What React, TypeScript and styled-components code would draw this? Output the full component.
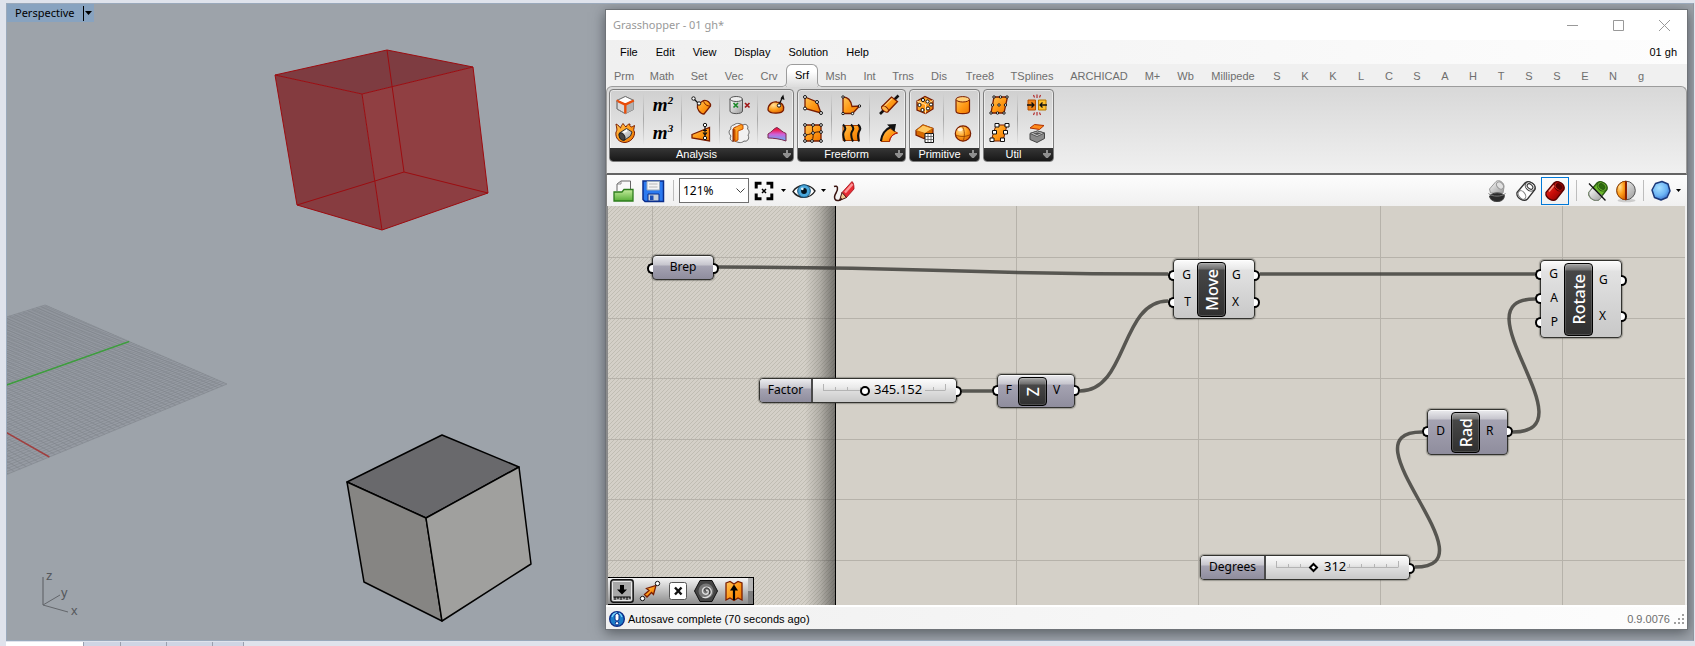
import React, { useState } from "react";
import styled, { createGlobalStyle, css } from "styled-components";

const UI = `"Liberation Sans", Arial, sans-serif`;
const HUMAN = `"Noto Sans", "Open Sans", sans-serif`;

const GlobalStyle = createGlobalStyle`
  *, *::before, *::after { box-sizing: border-box; }
  html, body { margin: 0; padding: 0; }
  body { background: #dfe3ec; font: 11px/16px ${UI}; color: #000; }
  button, input, select { font: inherit; color: inherit; margin: 0; padding: 0; }
  button { background: none; border: 0; cursor: default; }
  svg { display: block; }
`;

/* ---------- shell ---------- */

const Desktop = styled.div`
  min-height: 100vh;
  display: flex;
  flex-direction: column;
  padding: 3px 1px 0 6px;
  background: #dfe3ec;
`;

const Viewport = styled.main`
  position: relative;
  flex: 1;
  min-height: 600px;
  overflow: hidden;
  background: #9da3aa;
  border: 1px solid #9aa9bb;
  border-right-color: #8f959d;
`;

const ViewportTitle = styled.div`
  position: absolute;
  top: 0;
  left: 0;
  display: flex;
  align-items: center;
  height: 18px;
  padding: 0 2px 0 8px;
  gap: 8px;
  background: #88a3c0;
  font: 11px/18px ${HUMAN};
`;

const TitleMenu = styled.button`
  display: flex;
  align-items: center;
  height: 15px;
  width: 9px;
  border-left: 1px solid #000;
  padding-left: 1px;
`;

const Scene = styled.svg`
  position: absolute;
  inset: 0;
  width: 600px;
  height: 637px;
`;

const SheetTabs = styled.div`
  display: flex;
  height: 4px;
  margin-top: 1px;
`;

const SheetTab = styled.div<{ $w: number; $on?: boolean }>`
  width: ${(p) => p.$w}px;
  border-right: 1px solid #9aa0ae;
  background: ${(p) => (p.$on ? "#fff" : "#cfd5e4")};
`;

/* ---------- editor window ---------- */

const Window = styled.section`
  position: absolute;
  top: 5px;
  left: 598px;
  right: 5px;
  bottom: 10px;
  display: flex;
  flex-direction: column;
  background: #f0f0f0;
  border: 1px solid #6f7378;
  box-shadow: 0 3px 12px rgba(30, 34, 40, 0.55);
`;

const TitleBar = styled.header`
  display: flex;
  align-items: center;
  height: 30px;
  padding-left: 7px;
  background: #fff;
  color: #999;
  font: 11px/28px ${HUMAN};
`;

const TitleText = styled.h1`
  flex: 1;
  margin: 0;
  font: inherit;
`;

const CaptionButton = styled.button`
  width: 46px;
  height: 28px;
  display: grid;
  place-items: center;
`;

const MenuBar = styled.nav`
  display: flex;
  align-items: center;
  height: 24px;
  padding: 0 10px 0 5px;
  background: linear-gradient(90deg, #f0f0f0, #fdfdfd);
`;

const MenuItem = styled.button`
  height: 22px;
  padding: 0 9px;
`;

const DocName = styled.button`
  margin-left: auto;
  height: 22px;
`;

const TabStrip = styled.div`
  display: flex;
  align-items: flex-end;
  height: 22px;
`;

const Tab = styled.button<{ $w: number; $on?: boolean }>`
  position: relative;
  width: ${(p) => p.$w}px;
  height: 22px;
  padding-top: 1px;
  color: #6e6e6e;
  text-align: center;
  white-space: nowrap;
  ${(p) =>
    p.$on &&
    css`
      z-index: 1;
      height: 23px;
      margin-bottom: -1px;
      padding-bottom: 4px;
      color: #000;
      border: 1px solid #9c9c9c;
      border-bottom: 0;
      border-radius: 6px 6px 0 0;
      background: linear-gradient(#fff 30%, #dcdcdc);
      &::before,
      &::after {
        content: "";
        position: absolute;
        bottom: 0;
        width: 5px;
        height: 5px;
        border-bottom: 1px solid #9c9c9c;
        background: #f0f0f0;
      }
      &::before {
        left: -5px;
        border-right: 1px solid #9c9c9c;
        border-bottom-right-radius: 5px;
        box-shadow: 1px 1px 0 #e0e0e0;
      }
      &::after {
        right: -5px;
        border-left: 1px solid #9c9c9c;
        border-bottom-left-radius: 5px;
        box-shadow: -1px 1px 0 #e0e0e0;
      }
    `}
`;

const Ribbon = styled.div`
  display: flex;
  align-items: flex-start;
  gap: 3px;
  height: 89px;
  padding: 2px 1px 0 2px;
  border: 1px solid #9c9c9c;
  border-bottom: 2px solid #646464;
  border-radius: 6px 6px 0 0;
  background: linear-gradient(#d8d8d8, #f0f0f0);
`;

const Group = styled.section`
  flex: none;
  overflow: hidden;
  border: 1px solid #7d7d7d;
  border-radius: 4px;
  background: linear-gradient(#cfcfcf, #ececec 80%);
  box-shadow: inset 0 0 0 1px rgba(255, 255, 255, 0.5);
`;

const GroupIcons = styled.div`
  display: flex;
  gap: 14px;
  padding: 3px 4px 3px 3px;
`;

const IconColumn = styled.div`
  position: relative;
  display: flex;
  flex-direction: column;
  gap: 4px;
  & + &::before {
    content: "";
    position: absolute;
    left: -8px;
    top: 0;
    bottom: 0;
    width: 1px;
    background: linear-gradient(rgba(130, 130, 130, 0), #a8a8a8 50%, rgba(130, 130, 130, 0));
  }
`;

const IconButton = styled.button`
  width: 24px;
  height: 24px;
  display: grid;
  place-items: center;
`;

const Formula = styled.span`
  font: italic bold 19px/24px "Liberation Serif", "Times New Roman", serif;
  white-space: nowrap;
  sup {
    font-size: 11px;
    line-height: 1px;
    vertical-align: 7px;
  }
`;

const GroupBar = styled.div`
  display: flex;
  align-items: center;
  height: 13px;
  padding: 0 2px 1px 0;
  background: linear-gradient(#363636, #181818);
  color: #fff;
`;

const GroupName = styled.h2`
  flex: 1;
  margin: 0;
  font: 11px/12px ${UI};
  text-align: center;
`;

const ToolBar = styled.div`
  display: flex;
  align-items: center;
  height: 31px;
  padding: 0 5px 0 4px;
  border-left: 1px solid #7d7d7d;
  background: linear-gradient(#fdfdfd, #f0f0f0);
`;

const ToolButton = styled.button<{ $on?: boolean; $w?: number }>`
  width: ${(p) => p.$w ?? 28}px;
  height: 28px;
  display: grid;
  place-items: center;
  border: 1px solid ${(p) => (p.$on ? "#0078d7" : "transparent")};
`;

const Divider = styled.span<{ $gap: number }>`
  width: 1px;
  height: 21px;
  margin: 0 ${(p) => p.$gap}px;
  background: #bdbdbd;
`;

const Spacer = styled.span`
  flex: 1;
`;

const ZoomBox = styled.span`
  display: grid;
  align-items: center;
  margin: 0 1px 0 3px;
  > * {
    grid-area: 1 / 1;
  }
  > svg {
    justify-self: end;
    margin-right: 4px;
    pointer-events: none;
  }
`;

const ZoomSelect = styled.select`
  appearance: none;
  width: 70px;
  height: 25px;
  padding: 0 3px;
  border: 1px solid #707070;
  border-radius: 0;
  background: #fff;
  font: 12px/22px ${HUMAN};
`;

/* ---------- canvas ---------- */

const Canvas = styled.div`
  position: relative;
  flex: 1;
  min-height: 390px;
  overflow: hidden;
  margin-right: 2px;
  border-left: 2px solid #8a8a8a;
  background: #d4d0c8;
`;

const CanvasInk = styled.svg`
  position: absolute;
  inset: 0;
  width: 100%;
  height: 100%;
`;

const PURPLE = "linear-gradient(#ececef, #c6c5cd 9px, #a5a3b2 10px, #8f8d9d)";
const PALE = "linear-gradient(#fcfcfc, #e9e9e9 9px, #e2e2e2 10px, #c8c8c8)";

const NodeBox = styled.article<{ $x: number; $y: number; $w: number; $h: number; $pale?: boolean }>`
  position: absolute;
  left: ${(p) => p.$x}px;
  top: ${(p) => p.$y}px;
  width: ${(p) => p.$w}px;
  height: ${(p) => p.$h}px;
  display: flex;
  font: 12px/16px ${HUMAN};
  border: 1px solid #33332f;
  border-radius: 4px;
  background: ${(p) => (p.$pale ? PALE : PURPLE)};
  box-shadow: inset 0 1px 0 rgba(255, 255, 255, 0.7), 0 0 1px 1px rgba(50, 50, 45, 0.35);
`;

const Port = styled.span<{ $side: "in" | "out" }>`
  position: relative;
  display: flex;
  align-items: center;
  ${(p) => (p.$side === "in" ? "justify-content: flex-end; padding-right: 6px;" : "padding-left: 6px;")}
  &:empty {
    padding: 0;
  }
  &::after {
    content: "";
    position: absolute;
    top: calc(50% - 5px);
    ${(p) => (p.$side === "in" ? "left" : "right")}: -6px;
    width: 6px;
    height: 11px;
    border: 2px solid #000;
    background: #fff;
    ${(p) =>
      p.$side === "in"
        ? "border-right: 0; border-radius: 6px 0 0 6px;"
        : "border-left: 0; border-radius: 0 6px 6px 0;"}
  }
`;

const PortColumn = styled.div<{ $w?: number }>`
  ${(p) => (p.$w ? `width: ${p.$w}px;` : "flex: 1;")}
  display: grid;
  grid-auto-rows: 1fr;
  padding: 1px 0 3px;
`;

const Core = styled.div`
  flex: none;
  display: grid;
  place-items: center;
  width: 29px;
  margin: 2px 0 1px;
  border: 1px solid #000;
  border-radius: 4px;
  background: linear-gradient(#a5a5a5, #6e6e6e 6px, #474747 7px, #303030);
  box-shadow: inset 0 0 0 1px rgba(255, 255, 255, 0.15);
  color: #fff;
  font: 500 16px/20px ${HUMAN};
  span {
    writing-mode: vertical-rl;
    transform: rotate(180deg);
  }
`;

const ParamName = styled.span`
  flex: 1;
  line-height: 22px;
  text-align: center;
`;

const PortRail = styled.div`
  display: grid;
`;

const SliderName = styled.label<{ $w: number }>`
  width: ${(p) => p.$w}px;
  border-right: 2px solid #4a4a4a;
  border-radius: 3px 0 0 3px;
  background: ${PURPLE};
  line-height: 22px;
  text-align: center;
`;

const SliderBody = styled.div`
  position: relative;
  flex: 1;
  display: grid;
  align-items: center;
  padding-left: 5px;
  > * {
    grid-area: 1 / 1;
  }
`;

const SliderInput = styled.input<{ $diamond?: boolean }>`
  appearance: none;
  width: 132px;
  height: 23px;
  background: none;
  &::-webkit-slider-thumb {
    appearance: none;
    width: ${(p) => (p.$diamond ? 7 : 10)}px;
    height: ${(p) => (p.$diamond ? 7 : 10)}px;
    border: 2px solid #000;
    border-radius: ${(p) => (p.$diamond ? "0" : "50%")};
    background: #fff;
    ${(p) => p.$diamond && "transform: rotate(45deg);"}
  }
`;

const SliderValue = styled.output<{ $x: number }>`
  margin-left: ${(p) => p.$x}px;
  font: 13px/18px ${HUMAN};
  padding-bottom: 4px;
  pointer-events: none;
`;

const Palette = styled.div`
  position: absolute;
  left: 0;
  bottom: 0;
  display: flex;
  align-items: center;
  height: 28px;
  padding-left: 2px;
  gap: 4px;
  border: 1px solid #000;
  border-left: 0;
  background: linear-gradient(#f4f4f4, #8c8c8c);
`;

const PaletteEnd = styled.span`
  width: 5px;
  height: 26px;
  margin-left: -2px;
  background: linear-gradient(#b4b4b4 50%, #7d7d7d 50%);
`;

const StatusBar = styled.footer`
  display: flex;
  align-items: center;
  height: 24px;
  padding: 2px 2px 0 3px;
  gap: 3px;
  border-top: 2px solid #fff;
  background: linear-gradient(90deg, #f0f0f0, #fdfdfd);
`;

const Version = styled.span`
  margin-left: auto;
  color: #6d6d6d;
`;

/* ---------- icons ---------- */

type Art = { children: React.ReactNode; size?: number };
const Glyph = ({ children, size = 24 }: Art) => (
  <svg width={size} height={size} viewBox="0 0 24 24" fill="none" aria-hidden="true">
    {children}
  </svg>
);

const HiddenSvg = styled.svg`
  position: absolute;
  width: 0;
  height: 0;
`;

const SharedPaint = () => (
  <HiddenSvg aria-hidden="true">
    <defs>
      <linearGradient id="amber" x1="0" y1="0" x2="1" y2="1">
        <stop offset="0" stopColor="#ffc65a" />
        <stop offset=".5" stopColor="#ff9a17" />
        <stop offset="1" stopColor="#ee7600" />
      </linearGradient>
      <linearGradient id="steel" x1="0" y1="0" x2="1" y2="1">
        <stop offset="0" stopColor="#fff" />
        <stop offset="1" stopColor="#9a9a9a" />
      </linearGradient>
      <linearGradient id="heat" x1="0" y1="0" x2="0" y2="1">
        <stop offset=".15" stopColor="#f01848" />
        <stop offset=".5" stopColor="#d060d8" />
        <stop offset="1" stopColor="#58b8f8" />
      </linearGradient>
      <linearGradient id="ruby" x1="0" y1="0" x2="1" y2="1">
        <stop offset="0" stopColor="#f04030" />
        <stop offset=".5" stopColor="#c80c08" />
        <stop offset="1" stopColor="#6c0000" />
      </linearGradient>
      <linearGradient id="leaf" x1="0" y1="0" x2="0" y2="1">
        <stop offset="0" stopColor="#c4ec9c" />
        <stop offset="1" stopColor="#58ae38" />
      </linearGradient>
      <radialGradient id="ball" cx=".35" cy=".3" r=".8">
        <stop offset="0" stopColor="#ffe09a" />
        <stop offset=".5" stopColor="#ffa01c" />
        <stop offset="1" stopColor="#d86000" />
      </radialGradient>
      <radialGradient id="gem" cx=".4" cy=".35" r=".7">
        <stop offset="0" stopColor="#a8e0ff" />
        <stop offset=".6" stopColor="#6cb4f4" />
        <stop offset="1" stopColor="#3468c8" />
      </radialGradient>
    </defs>
  </HiddenSvg>
);

const BROWN = "#7a1d00";
const Dots = ({ at, r = 1.5 }: { at: number[][]; r?: number }) => (
  <g fill="#fff" stroke="#111" strokeWidth="1">
    {at.map(([x, y], i) => (
      <circle key={i} cx={x} cy={y} r={r} />
    ))}
  </g>
);

const BoxEdges = () => (
  <Glyph>
    <path d="M4 7.5 12.3 3.5 20.5 7.3V16.5L12.3 20.7 4 16Z" fill="#d9d9d9" stroke="#777" />
    <path d="M4 7.5 12.3 3.5 20.5 7.3 12.3 11.3Z" fill="#fff" stroke="#777" />
    <path d="M12.3 11.3V20.7L20.5 16.5V7.3Z" fill="#b2b2b2" />
    <path d="M3.5 7.5 12.3 11.6 20.8 7.5M12.3 11.5V20.5" stroke="#e84e0c" strokeWidth="2.4" />
    <path d="M4 8V16L11 20" stroke="#888" />
  </Glyph>
);
const Burning = () => (
  <Glyph>
    <path d="M3 11C5 9 3 5 3 3 6 4 6 6 7.5 7 8 5 9 4 10 2.5 11 4 12 5 13 6 14 4 15 3 17 3 16 5 18 6 19 6 20 5 21 5 21.5 4.5 21 8 20 9 21.5 11 22 16 18 21 12 21.5 6 21.500 2 17 3 11Z" fill="url(#amber)" stroke={BROWN} />
    <path d="M6.500 12 13.500 7.500 19 11 17.500 15 11 19.500 6.500 17Z" fill="url(#steel)" stroke="#333" />
    <ellipse cx="9" cy="15.500" rx="2.500" ry="4" fill="#444" stroke="#222" transform="rotate(-30 9 15.500)" />
    <path d="M10.500 11.500 14 9.500" stroke="#fff" strokeWidth="1.500" />
  </Glyph>
);
const BrepPoint = () => (
  <Glyph>
    <path d="M8.500 11.500 14.500 7.500C18 6.500 22 10 21.500 13L15 21C11 21 7.500 16 8.500 11.500Z" fill="url(#amber)" stroke={BROWN} strokeWidth="1.300" />
    <path d="M14.500 7.500C15 11 18 13.500 21.500 13" stroke={BROWN} />
    <path d="M4.500 5.500 10 11" stroke="#111" strokeWidth="1.200" />
    <Dots at={[[4.500, 5.500], [10, 10.500]]} r={1.700} />
  </Glyph>
);
const SurfacePoint = () => (
  <Glyph>
    <path d="M3 13.500 20.500 6.500V20L3 17Z" fill="url(#amber)" stroke={BROWN} strokeWidth="1.300" />
    <path d="M16 4V16M14 9.500H18M14 11.500 16 14 18 11.500" stroke="#111" strokeWidth="1.200" />
    <Dots at={[[16, 4], [16, 17]]} r={1.700} />
  </Glyph>
);
const InBrep = () => (
  <Glyph>
    <path d="M3 6V18C3 21.500 15.500 21.500 15.500 18V6" fill="url(#steel)" stroke="#555" />
    <ellipse cx="9.200" cy="6" rx="6.200" ry="2.500" fill="#eee" stroke="#555" />
    <path d="M6.500 10 11 14.500M11 10 6.500 14.500" stroke="#1d8a2a" strokeWidth="1.700" />
    <path d="M18 10 22.500 14.500M22.500 10 18 14.500" stroke="#a01818" strokeWidth="1.700" />
  </Glyph>
);
const InTrim = () => (
  <Glyph>
    <path d="M7 4C10 1 14 3 16 4 19 2 22 5 20.500 8 23 10 22 13 21 14 23 18 20 21 17 20 14 23 10 21 8 20 4 21 2 18 4 15 1 12 2 9 4 8 3 6 5 4 7 4Z" fill="#f1f1f1" stroke="#666" />
    <path d="M6 8 8.500 6V18L6 20.500Z" fill="#c85000" stroke={BROWN} />
    <path d="M6 7.500 14 3.500 16 4.500V8L11 10V19L8 20.500V8.500Z" fill="url(#amber)" stroke="#c85000" />
  </Glyph>
);
const Evaluate = () => (
  <Glyph>
    <path d="M3 17C3 11 8 8 12 9 17 9 19.500 13 18.500 17 17 21 5 21.500 3 17Z" fill="url(#ball)" stroke={BROWN} strokeWidth="1.300" />
    <path d="M14 12 17.500 4" stroke="#111" strokeWidth="1.300" />
    <path d="M18.300 1.500 19.500 7 15.500 5.500Z" fill="#111" />
    <Dots at={[[14, 12.500]]} r={1.700} />
  </Glyph>
);
const Curvature = () => (
  <Glyph>
    <path d="M3 13C7 11 9 7 12 6.500 15 8 17 11 21 12.500V20C16 18 8 17 3 17Z" fill="url(#heat)" stroke="#7a2850" />
  </Glyph>
);
const FourPoint = () => (
  <Glyph>
    <path d="M4 4 16 9 20 20 4 15.500Z" fill="url(#amber)" stroke={BROWN} strokeWidth="1.300" />
    <Dots at={[[4, 4], [16, 9], [20, 20], [4, 15.500]]} />
  </Glyph>
);
const PatchGrid = () => (
  <Glyph>
    <path d="M4 4H20V20H4Z" fill="url(#amber)" stroke={BROWN} strokeWidth="1.300" />
    <path d="M12 4C10 8 14 13 11 20M4 14C9 14 14 10 20 11" stroke="#4a1400" />
    <Dots at={[[4, 4], [12, 4], [20, 4], [4, 14], [20, 11], [12, 12], [4, 20], [11, 20], [20, 20]]} r={1.400} />
  </Glyph>
);
const Revolve = () => (
  <Glyph>
    <path d="M4 4C9 4 12 8 13 13.500L20.500 13 13.500 20.500H4Z" fill="url(#amber)" stroke={BROWN} strokeWidth="1.300" />
    <Dots at={[[4, 4], [4, 20.500], [13.500, 20.500], [20.500, 13]]} r={1.200} />
  </Glyph>
);
const Loft = () => (
  <Glyph>
    <path d="M4 4.500H20V19.500H4Z" fill="url(#amber)" stroke="#a33c00" />
    <path d="M4 3.500Q8 7 5 10.500 3 14 6 20.500M12 3.500Q16 7 13 10.500 11 14 14 20.500M19 3.500Q23 7 20 10.500 18 14 20 20.500" stroke="#111" strokeWidth="2" />
  </Glyph>
);
const Pipe = () => (
  <Glyph>
    <path d="M3 21 8 16M17 7 21.500 2.500" stroke="#111" strokeWidth="2.600" />
    <path d="M5 13.500 14.500 4 20.500 8.500 11 18.500Z" fill="url(#amber)" stroke={BROWN} strokeWidth="1.300" />
    <ellipse cx="8" cy="16" rx="2.300" ry="4" transform="rotate(-48 8 16)" fill="#ffb348" stroke={BROWN} />
    <path d="M7.500 13 15 5.500" stroke="#ffe0a0" />
  </Glyph>
);
const Sweep = () => (
  <Glyph>
    <path d="M4 20.500C4 15 8 9 13 7.500L20.500 12C15 13 13 17 12.500 20.500Z" fill="url(#amber)" stroke="#a33c00" />
    <path d="M4 20C4.500 14 8 8 14 6" stroke="#111" strokeWidth="2.200" />
    <path d="M10 3.500 19 3 17.500 11Z" fill="#111" />
    <path d="M12.500 20.500C13 16 16 13 20.500 12" stroke="#c01010" />
  </Glyph>
);
const BoundingBox = () => (
  <Glyph>
    <path d="M4 8 12 3.500 20 7.500V16L12.500 20.500 4 17Z" fill="url(#amber)" stroke={BROWN} strokeWidth="1.300" />
    <path d="M4 8 12.500 11.500 20 7.500M12.500 11.500V20.500" stroke="#ffe0a0" />
    <Dots at={[[10, 7], [14.500, 8.500], [6.500, 12], [9.500, 17], [15, 15.500], [18, 11.500]]} r={1.600} />
  </Glyph>
);
const DomainBox = () => (
  <Glyph>
    <path d="M3 9.500 10 4 20 7.500V12L11 17.500 3 14Z" fill="#d86a00" stroke={BROWN} strokeWidth="1.200" />
    <path d="M3 9.500 10 4 20 7.500 12 12.500Z" fill="#ffc860" stroke="#c86400" />
    <path d="M12 12.500H20.500V21.500H12Z" fill="#fff" stroke="#111" />
    <path d="M15 12.500V21.500M18 12.500V21.500M12 15.500H20.500M12 18.500H20.500" stroke="#555" strokeWidth=".8" />
  </Glyph>
);
const Cylinder = () => (
  <Glyph>
    <path d="M5 6.500V18C5 21.500 18.500 21.500 18.500 18V6.500" fill="url(#amber)" stroke={BROWN} strokeWidth="1.200" />
    <ellipse cx="11.700" cy="6.300" rx="6.700" ry="2.700" fill="#ffd07a" stroke={BROWN} />
  </Glyph>
);
const Sphere = () => (
  <Glyph>
    <circle cx="12" cy="12.500" r="7.700" fill="url(#ball)" stroke={BROWN} strokeWidth="1.200" />
    <path d="M4.500 14C9 16 15 16 19.500 13.500M11 5C14 9 14 16 12 20" stroke="#8a3a00" strokeWidth=".8" />
    <ellipse cx="9" cy="8.500" rx="2.500" ry="1.800" fill="#fff" opacity=".7" />
  </Glyph>
);
const Divide = () => (
  <Glyph>
    <path d="M7 4H20.500L17 20H4Z" fill="url(#amber)" stroke={BROWN} strokeWidth="1.300" />
    <Dots at={[[7, 4], [13.500, 4], [20, 4], [5.500, 12], [12, 12], [18.500, 12], [4, 20], [10.500, 20], [17, 20]]} r={1.200} />
  </Glyph>
);
const Frames = () => (
  <Glyph>
    <path d="M9 4H20L16 20H4Z" fill="url(#amber)" stroke={BROWN} />
    <path d="M8 2.500H12V6H8ZM18 2.500H22V6H18ZM5.500 9.500H9.500V13H5.500ZM16.500 9.500H20.500V13H16.500ZM3 17H7V20.500H3ZM13.500 17H17.500V20.500H13.500Z" fill="#fff" stroke="#111" />
  </Glyph>
);
const Merge = () => (
  <Glyph>
    <path d="M3 7H10.500V17H3Z" fill="#ee8418" stroke="#b85000" />
    <path d="M13.500 7H21V17H13.500Z" fill="#ffc02c" stroke="#b87800" />
    <path d="M2 12H9M6.500 9.500 9 12 6.500 14.500M22 12H15M17.500 9.500 15 12 17.500 14.500" stroke="#111" strokeWidth="1.300" />
    <path d="M12 1.500V5M12 19V22.500M8.500 2 9.500 4.500M15.500 2 14.500 4.500M8.500 22 9.500 19.500M15.500 22 14.500 19.500" stroke="#b02020" strokeWidth="1.100" />
  </Glyph>
);
const CapHoles = () => (
  <Glyph>
    <path d="M5 12.500 12.500 10 19.500 12V17.500L12 21.500 5 18.500Z" fill="#8a8a8a" stroke="#444" />
    <path d="M5 12.500 12.500 10 19.500 12 12 15.500Z" fill="#d0d0d0" stroke="#555" />
    <path d="M8 12.500 12.500 11.300 16.500 12.300 12 14Z" fill="#555" />
    <path d="M5 7 9.500 3.500 19 4.500 14.500 8.500Z" fill="#ff8a1a" stroke="#b03000" />
  </Glyph>
);

const OpenIcon = () => (
  <Glyph>
    <path d="M5 12V5L9 2H18.500V12" fill="#fafafa" stroke="#666" />
    <path d="M5 5H9V2" stroke="#888" />
    <path d="M2 22V13H10L12 10.500H21V22Z" fill="url(#leaf)" stroke="#2c7c1c" strokeWidth="1.300" />
  </Glyph>
);
const SaveIcon = () => (
  <Glyph>
    <path d="M2 2H22.500V22.500H4L2 20.500Z" fill="#2c7af0" stroke="#0a2e8c" strokeWidth="1.500" />
    <path d="M6 2.500H18.500V11H6Z" fill="#f4f4f4" stroke="#9ab" />
    <path d="M8 5H16.500M8 8H16.500" stroke="#b8b8b8" />
    <path d="M7 15H18V22H7Z" fill="#c8d0dc" stroke="#0a2e8c" />
    <path d="M9 16.500H12.500V21H9Z" fill="#1c4eb4" />
  </Glyph>
);
const ExtentsIcon = () => (
  <Glyph>
    <path d="M4.200 9.500V4.200H9.500M14.500 4.200H19.800V9.500M19.800 14.500V19.800H14.500M9.500 19.800H4.200V14.500" stroke="#000" strokeWidth="3" />
    <path d="M10 10 14 14M14 10 10 14" stroke="#000" strokeWidth="1.500" />
  </Glyph>
);
const EyeIcon = () => (
  <Glyph>
    <path d="M1 12.500C5 5.500 17 3.500 23 12 18 20.500 6 20 1 12.500Z" fill="#fff" stroke="#222" strokeWidth="1.400" />
    <circle cx="12" cy="12" r="6.300" fill="#4aa8dc" stroke="#145078" />
    <circle cx="12" cy="12" r="2.900" fill="#04141e" />
    <circle cx="10.300" cy="9.800" r="1.400" fill="#d8f4ff" />
  </Glyph>
);
const SketchIcon = () => (
  <Glyph>
    <path d="M10 13.500 20 2.500C22 4 22 8 22 10L14.500 18.500Z" fill="#e82c34" stroke="#a01018" strokeWidth=".8" />
    <path d="M13 13.500 20.500 5" stroke="#ff9898" strokeWidth="2.400" />
    <path d="M10 13.500 14.500 18.500 7.500 21.500Z" fill="#f0c890" stroke="#4a1410" />
    <path d="M9 18.500 7 22 10.500 20.500Z" fill="#3a1410" />
    <path d="M2 7.500C6 6 6.500 10 4 14 1 19 3 23 8 21" stroke="#3a1410" strokeWidth="1.500" />
  </Glyph>
);

type Can = { body: string; hole: string; line: string };
const CanShape = ({ body, hole, line }: Can) => (
  <>
    <path d="M3 13.500 11 4C14 .5 22.500 5 21 10.500L13.500 20C10 23.500 2 19 3 13.500Z" fill={body} stroke={line} strokeWidth="1.300" />
    <ellipse cx="16" cy="7.500" rx="4" ry="5.300" transform="rotate(-50 16 7.500)" fill={body} stroke={line} />
    <ellipse cx="16" cy="7.500" rx="2.200" ry="3.300" transform="rotate(-50 16 7.500)" fill={hole} stroke={line} />
  </>
);
const NoPreview = () => (
  <Glyph>
    <path d="M4.500 10 11 2.500C14 0 19.500 3.500 19 8L18 14H5.500Z" fill="url(#steel)" stroke="#999" />
    <ellipse cx="15" cy="6.500" rx="3" ry="4" transform="rotate(-40 15 6.500)" fill="#e0e0e0" stroke="#999" />
    <path d="M4.500 17C8 13 16 13 19.500 16.500 19 20 17.500 22.500 12 22.500 7 22.500 5 20 4.500 17Z" fill="#2a2a2a" stroke="#444" />
    <path d="M3.500 14.500C7 18 17 18 20.500 14.500" stroke="#777" />
  </Glyph>
);
const WirePreview = () => (
  <Glyph>
    <CanShape body="#fff" hole="#fff" line="#333" />
    <ellipse cx="8" cy="16" rx="3.200" ry="4.800" transform="rotate(-35 8 16)" stroke="#777" />
  </Glyph>
);
const ShadedPreview = () => (
  <Glyph>
    <CanShape body="url(#ruby)" hole="#5a0000" line="#5a0000" />
    <path d="M6 12.500 11 6.500" stroke="#ff9080" strokeWidth="1.600" />
  </Glyph>
);
const SelectedPreview = () => (
  <Glyph>
    <CanShape body="#6cb82c" hole="#2c6c0c" line="#2c5c14" />
    <path d="M3 13.500 6.500 9 16.500 17 13.500 20.500C9 23.500 2 18.500 3 13.500Z" fill="url(#steel)" stroke="#888" />
    <path d="M3 4.500 19.500 21.500" stroke="#111" strokeWidth="1.300" />
  </Glyph>
);
const HalfBall = () => (
  <Glyph>
    <ellipse cx="12.500" cy="21.500" rx="9" ry="1.800" fill="#ccc" />
    <circle cx="12" cy="11.500" r="9.300" fill="url(#steel)" stroke="#555" />
    <path d="M12 2.200A9.300 9.300 0 0 0 12 20.800Z" fill="url(#ball)" stroke="#a04800" />
    <path d="M12 2.200V20.800" stroke="#8a2000" strokeWidth="2" />
  </Glyph>
);
const GemIcon = () => (
  <Glyph>
    <path d="M6.500 4.500 13 2.500 19 5 21 12 18 18.500 12 21 5.500 18.500 3 11Z" fill="url(#gem)" stroke="#1c3878" strokeWidth="1.500" strokeLinejoin="round" />
  </Glyph>
);
const Caret = () => (
  <svg width="5" height="3" viewBox="0 0 5 3" aria-hidden="true">
    <path d="M0 0H5L2.500 3Z" fill="#000" />
  </svg>
);
const TitleCaret = () => (
  <svg width="7" height="4" viewBox="0 0 7 4" aria-hidden="true">
    <path d="M0 0H7L3.500 4Z" fill="#000" />
  </svg>
);

const LandIcon = () => (
  <Glyph>
    <rect x=".8" y=".8" width="22.400" height="22.400" rx="2.500" fill="#a8a8a8" stroke="#111" strokeWidth="1.400" />
    <rect x="2.500" y="2.500" width="19" height="19" rx="1" fill="none" stroke="#e8e8e8" />
    <path d="M10 6H14V10.500H17L12 15.500 7 10.500H10Z" fill="#000" />
    <path d="M3.500 18H20.500M5 18V21M8 18V20M11 18V21M14 18V20M17 18V21M20 18V20" stroke="#000" />
  </Glyph>
);
const ArrowIcon = () => (
  <Glyph>
    <path d="M6.500 15.500 11 11.500 8.500 9.500 18 6.500 15.500 15.500 13.500 13.500 9 18Z" fill="url(#amber)" stroke={BROWN} strokeWidth="1.300" />
    <Dots at={[[4.500, 19.500], [19.500, 4.500]]} r={2.200} />
  </Glyph>
);
const CrossIcon = () => (
  <Glyph>
    <rect x="3.500" y="3.500" width="17" height="17" rx="2" fill="#fff" stroke="#555" />
    <path d="M9 8.500 15.500 15.500M15.500 8.500 9 15.500" stroke="#111" strokeWidth="2.400" />
  </Glyph>
);
const SpiralIcon = () => (
  <Glyph>
    <path d="M6 1.500H18L23.500 12 18 22.500H6L.5 12Z" fill="#444" stroke="#111" />
    <circle cx="12" cy="12" r="7.500" fill="#777" />
    <path d="M12 12C13 10 15 12 14 14 12 16.500 8 15 8.500 11 9.500 7.500 15 7 17 11 18.500 16 13 20 8.500 18" stroke="#ddd" strokeWidth="1.300" />
    <path d="M12 12C10 12 10 9.500 12 9 15 8.500 16.500 12 15.500 15" stroke="#333" />
  </Glyph>
);
const BookIcon = () => (
  <Glyph>
    <path d="M4 4 8 2.500 12 5 16 2.500 20 4V21L16 19 12 21.500 8 19 4 21Z" fill="url(#amber)" stroke={BROWN} strokeWidth="1.300" />
    <path d="M12 21V9" stroke="#000" strokeWidth="2.200" />
    <path d="M12 5.500 16 11.500H8Z" fill="#000" />
  </Glyph>
);
const AlertIcon = () => (
  <svg width="16" height="16" viewBox="0 0 16 16" aria-hidden="true">
    <circle cx="8" cy="8" r="7.300" fill="#1c7cc8" stroke="#0c2c88" strokeWidth="1.400" />
    <path d="M3 6C4 3 6 2 8 2M13 6C12 3.500 11 2.500 10 2" stroke="#7ad4ff" strokeWidth="1.300" fill="none" />
    <rect x="6" y="2.500" width="4" height="7.500" rx="2" fill="#fff" stroke="#0c2c88" />
    <circle cx="8" cy="12.300" r="1.700" fill="#fff" stroke="#0c2c88" />
  </svg>
);
const ExpandMark = () => (
  <svg width="8" height="8" viewBox="0 0 8 8" aria-hidden="true">
    <path d="M3 0H5V3H8V4.500L4.800 8H3.200L0 4.500V3H3Z" fill="#8f8f8f" />
  </svg>
);

/* ---------- data ---------- */

const menus = ["File", "Edit", "View", "Display", "Solution", "Help"];

const tabs: [string, number][] = [
  ["Prm", 36], ["Math", 40], ["Set", 34], ["Vec", 36], ["Crv", 34], ["Srf", 32], ["Msh", 36], ["Int", 31],
  ["Trns", 36], ["Dis", 36], ["Tree8", 46], ["TSplines", 58], ["ARCHICAD", 76], ["M+", 31], ["Wb", 35],
  ["Millipede", 60], ...("SKKLCSAHTSSENg".split("").map((c) => [c, 28]) as [string, number][]),
];

const groups: { name: string; columns: [string, React.ReactNode][][] }[] = [
  {
    name: "Analysis",
    columns: [
      [["Deconstruct", <BoxEdges />], ["Brep flame", <Burning />]],
      [["Area", <Formula>m<sup>2</sup></Formula>], ["Volume", <Formula>m<sup>3</sup></Formula>]],
      [["Brep closest point", <BrepPoint />], ["Surface closest point", <SurfacePoint />]],
      [["Point in brep", <InBrep />], ["Point in trim", <InTrim />]],
      [["Evaluate", <Evaluate />], ["Curvature", <Curvature />]],
    ],
  },
  {
    name: "Freeform",
    columns: [
      [["4Point surface", <FourPoint />], ["Surface from points", <PatchGrid />]],
      [["Edge surface", <Revolve />], ["Loft", <Loft />]],
      [["Pipe", <Pipe />], ["Sweep", <Sweep />]],
    ],
  },
  {
    name: "Primitive",
    columns: [
      [["Bounding box", <BoundingBox />], ["Domain box", <DomainBox />]],
      [["Cylinder", <Cylinder />], ["Sphere", <Sphere />]],
    ],
  },
  {
    name: "Util",
    columns: [
      [["Divide surface", <Divide />], ["Surface frames", <Frames />]],
      [["Brep join", <Merge />], ["Cap holes", <CapHoles />]],
    ],
  },
];

/* ---------- 3D scene ---------- */

type Pt = [number, number];

// Construction plane in homogeneous form: one corner plus two vanishing points.
const CORNER: Pt = [220, 380];
const VP_A: Pt = [-1078, -184];
const VP_B: Pt = [1593, -184];
const W0 = 1 / 564;
const STEP_A = 0.0002889 / 70;
const STEP_B = 0.0002031 / 35;

const project = (u: number, v: number): Pt => {
  const w = W0 + u * STEP_A - v * STEP_B;
  const at = (i: 0 | 1) => (W0 * CORNER[i] + u * STEP_A * VP_A[i] - v * STEP_B * VP_B[i]) / w;
  return [at(0), at(1)];
};

const segment = (a: Pt, b: Pt) => `M${a.map((n) => n.toFixed(1))}L${b.map((n) => n.toFixed(1))}`;
const steps = Array.from({ length: 71 }, (_, i) => i);
const gridPath = steps
  .map((i) => segment(project(i, 0), project(i, 70)) + segment(project(0, i), project(70, i)))
  .join("");
const planeOutline = [project(0, 0), project(70, 0), project(70, 70), project(0, 70)].join(" ");

const PerspectiveScene = () => (
  <Scene viewBox="0 0 600 637" role="img" aria-label="Perspective view with two boxes">
    <polygon points={planeOutline} fill="#969ba3" />
    <path d={gridPath} stroke="#7f848c" strokeWidth=".6" fill="none" />
    <path d={segment(project(35, 0), project(35, 70))} stroke="#3f9c3f" strokeWidth="1.500" />
    <path d={segment(project(0, 35), project(70, 35))} stroke="#a04040" strokeWidth="1.500" />

    <g transform="translate(-7 -4)" strokeLinejoin="round">
      <g stroke="none">
        <path d="M275 75 387 50 473 67 362 94Z" fill="#7e3c41" />
        <path d="M275 75 362 94 382 230 297 205Z" fill="#843b3f" />
        <path d="M362 94 473 67 488 193 382 230Z" fill="#903f42" />
        <path d="M297 205 404 172 488 193 382 230Z" fill="#8a3e42" opacity=".5" />
      </g>
      <path
        d="M275 75 387 50 473 67 362 94ZM275 75 297 205 382 230 362 94M382 230 488 193 473 67M387 50 404 172 297 205M404 172 488 193"
        fill="none"
        stroke="#9c0c10"
      />
      <g stroke="#000" strokeWidth="1.500">
        <path d="M347 482 442 435 519 467 426 518Z" fill="#69696c" />
        <path d="M347 482 426 518 442 621 364 582Z" fill="#868583" />
        <path d="M426 518 519 467 531 564 442 621Z" fill="#a0a09e" />
      </g>
      <path d="M43 605V577" stroke="#7b7f85" strokeWidth="2" />
      <path d="M43 605 60 595M43 605 68 612" stroke="#63666b" />
      <g fill="#55585c" fontFamily="Liberation Sans, sans-serif" fontSize="13">
        <text x="46" y="580">z</text>
        <text x="61" y="597">y</text>
        <text x="71" y="615">x</text>
      </g>
    </g>
  </Scene>
);

/* ---------- canvas parts ---------- */

type NodeProps = {
  x: number; y: number; w: number; h: number;
  title: string; inputs: string[]; outputs: string[];
  pale?: boolean; inset?: number;
};

const Component = ({ x, y, w, h, title, inputs, outputs, pale, inset = 23 }: NodeProps) => (
  <NodeBox $x={x} $y={y} $w={w} $h={h} $pale={pale}>
    <PortColumn $w={inset}>
      {inputs.map((n) => <Port key={n} $side="in">{n}</Port>)}
    </PortColumn>
    <Core><span>{title}</span></Core>
    <PortColumn>
      {outputs.map((n) => <Port key={n} $side="out">{n}</Port>)}
    </PortColumn>
  </NodeBox>
);

type SliderProps = {
  x: number; y: number; w: number; name: string; nameWidth: number;
  value: number; step: number; readoutAt: number; readoutEnd: number; diamond?: boolean;
};

const NumberSlider = ({ x, y, w, name, nameWidth, value, step, readoutAt, readoutEnd, diamond }: SliderProps) => {
  const [current, setCurrent] = useState(value);
  const id = `slider-${name}`;
  const thumb = 5 + (current / 1000) * 122;
  const ticks = steps.slice(0, 11).map((i) => 5 + i * 12.2).filter((t) => t < thumb - 4 || t > readoutEnd);
  return (
    <NodeBox $x={x} $y={y} $w={w} $h={25} $pale>
      <SliderName $w={nameWidth} htmlFor={id}>{name}</SliderName>
      <SliderBody>
        <svg width="133" height="23" aria-hidden="true">
          <path
            d={
              `M5 11.500H${thumb - 5}M${readoutEnd} 11.500H127.500` +
              ticks.map((t, i) => `M${Math.round(t) + 0.5} ${i === 0 || i === ticks.length - 1 ? 5 : 8}V11`).join("")
            }
            stroke="#b4b4b4"
          />
        </svg>
        <SliderInput
          id={id}
          type="range"
          min={0}
          max={1000}
          step={step}
          value={current}
          $diamond={diamond}
          onChange={(e) => setCurrent(Number(e.target.value))}
        />
        <SliderValue $x={readoutAt} htmlFor={id}>{current}</SliderValue>
      </SliderBody>
      <PortRail><Port $side="out" /></PortRail>
    </NodeBox>
  );
};

const verticals = [44, 408, 590, 772, 954];
const horizontals = [51, 112, 172, 233, 293, 354];

const CanvasBackdrop = () => (
  <CanvasInk aria-hidden="true">
    <defs>
      <pattern id="hatch" width="4" height="4" patternUnits="userSpaceOnUse">
        <path d="M-1 1 1 -1M0 4 4 0M3 5 5 3" stroke="#c0bdb3" strokeWidth="1" />
      </pattern>
      <linearGradient id="edge">
        <stop offset="0" stopColor="#2a2a28" stopOpacity="0" />
        <stop offset=".5" stopColor="#2a2a28" stopOpacity=".2" />
        <stop offset="1" stopColor="#2a2a28" stopOpacity=".55" />
      </linearGradient>
    </defs>
    <rect width="227" height="100%" fill="url(#hatch)" />
    <g stroke="#b6b2aa" strokeWidth="1">
      {verticals.map((v) => <line key={v} x1={v + 0.5} x2={v + 0.5} y1="0" y2="100%" />)}
      {horizontals.map((h) => <line key={h} y1={h + 0.5} y2={h + 0.5} x1="0" x2="100%" />)}
    </g>
    <rect x="197" width="30" height="100%" fill="url(#edge)" />
    <rect x="227" width="1" height="100%" fill="#000" />
    <g fill="none" stroke="#3c3b37" strokeOpacity=".82" strokeWidth="3.500">
      <path d="M110 61C334 61 336 68 560 68" />
      <path d="M652 68H927" />
      <path d="M354 185H384" />
      <path d="M472 185C520 185 512 95 560 95" />
      <path d="M905 226C985 226 847 93 927 93" />
      <path d="M807 361C889 361 732 226 814 226" />
    </g>
  </CanvasInk>
);

/* ---------- app ---------- */

export default function App() {
  return (
    <>
      <GlobalStyle />
      <SharedPaint />
      <Desktop>
        <Viewport>
          <PerspectiveScene />
          <ViewportTitle>
            <span>Perspective</span>
            <TitleMenu aria-label="Viewport menu"><TitleCaret /></TitleMenu>
          </ViewportTitle>

          <Window>
            <TitleBar>
              <TitleText>Grasshopper - 01 gh*</TitleText>
              <CaptionButton aria-label="Minimise">
                <svg width="11" height="11"><path d="M0 5.500H11" stroke="#999" /></svg>
              </CaptionButton>
              <CaptionButton aria-label="Maximise">
                <svg width="11" height="11"><path d="M.5.5H10.500V10.500H.5Z" fill="none" stroke="#999" /></svg>
              </CaptionButton>
              <CaptionButton aria-label="Close">
                <svg width="11" height="11"><path d="M0 0 11 11M11 0 0 11" stroke="#999" /></svg>
              </CaptionButton>
            </TitleBar>

            <MenuBar>
              {menus.map((m) => <MenuItem key={m}>{m}</MenuItem>)}
              <DocName>01 gh</DocName>
            </MenuBar>

            <TabStrip role="tablist">
              {tabs.map(([name, w], i) => (
                <Tab key={i} role="tab" aria-selected={name === "Srf"} $w={w} $on={name === "Srf"}>{name}</Tab>
              ))}
            </TabStrip>

            <Ribbon>
              {groups.map((g) => (
                <Group key={g.name}>
                  <GroupIcons>
                    {g.columns.map((col, i) => (
                      <IconColumn key={i}>
                        {col.map(([label, art]) => (
                          <IconButton key={label} aria-label={label}>{art}</IconButton>
                        ))}
                      </IconColumn>
                    ))}
                  </GroupIcons>
                  <GroupBar>
                    <GroupName>{g.name}</GroupName>
                    <ExpandMark />
                  </GroupBar>
                </Group>
              ))}
            </Ribbon>

            <ToolBar>
              <ToolButton aria-label="Open" $w={24}><OpenIcon /></ToolButton>
              <ToolButton aria-label="Save" $w={36}><SaveIcon /></ToolButton>
              <Divider $gap={2} />
              <ZoomBox>
                <ZoomSelect aria-label="Zoom" defaultValue="121%">
                  <option>121%</option>
                  <option>100%</option>
                </ZoomSelect>
                <svg width="9" height="6" aria-hidden="true">
                  <path d="M.5.500 4.500 4.500 8.500.5" stroke="#444" fill="none" />
                </svg>
              </ZoomBox>
              <ToolButton aria-label="Zoom extents"><ExtentsIcon /></ToolButton>
              <ToolButton aria-label="Zoom options" $w={10}><Caret /></ToolButton>
              <ToolButton aria-label="Named views" $w={31}><EyeIcon /></ToolButton>
              <ToolButton aria-label="View options" $w={9}><Caret /></ToolButton>
              <ToolButton aria-label="Sketch" $w={32}><SketchIcon /></ToolButton>
              <Spacer />
              <ToolButton aria-label="No preview"><NoPreview /></ToolButton>
              <ToolButton aria-label="Wireframe preview" $w={30}><WirePreview /></ToolButton>
              <ToolButton aria-label="Shaded preview" $on><ShadedPreview /></ToolButton>
              <Divider $gap={7} />
              <ToolButton aria-label="Preview selected"><SelectedPreview /></ToolButton>
              <ToolButton aria-label="Document preview"><HalfBall /></ToolButton>
              <Divider $gap={3} />
              <ToolButton aria-label="Mesh quality"><GemIcon /></ToolButton>
              <ToolButton aria-label="Mesh quality options" $w={7}><Caret /></ToolButton>
            </ToolBar>

            <Canvas>
              <CanvasBackdrop />
              <NodeBox $x={44} $y={49} $w={62} $h={25}>
                <PortRail><Port $side="in" /></PortRail>
                <ParamName>Brep</ParamName>
                <PortRail><Port $side="out" /></PortRail>
              </NodeBox>
              <Component x={565} y={53} w={82} h={60} title="Move" inputs={["G", "T"]} outputs={["G", "X"]} pale />
              <Component x={932} y={54} w={82} h={78} title="Rotate" inputs={["G", "A", "P"]} outputs={["G", "X"]} pale />
              <Component x={389} y={168} w={78} h={34} title="Z" inputs={["F"]} outputs={["V"]} inset={20} />
              <Component x={819} y={203} w={81} h={46} title="Rad" inputs={["D"]} outputs={["R"]} />
              <NumberSlider x={151} y={172} w={198} name="Factor" nameWidth={53} value={345.152} step={0.001} readoutAt={56} readoutEnd={107} />
              <NumberSlider x={592} y={349} w={210} name="Degrees" nameWidth={65} value={312} step={1} readoutAt={53} readoutEnd={76} diamond />

              <Palette>
                <IconButton aria-label="Land"><LandIcon /></IconButton>
                <IconButton aria-label="Connect"><ArrowIcon /></IconButton>
                <IconButton aria-label="Disable"><CrossIcon /></IconButton>
                <IconButton aria-label="Spiral"><SpiralIcon /></IconButton>
                <IconButton aria-label="Bookmark"><BookIcon /></IconButton>
                <PaletteEnd />
              </Palette>
            </Canvas>

            <StatusBar>
              <AlertIcon />
              <span>Autosave complete (70 seconds ago)</span>
              <Version>0.9.0076</Version>
              <svg width="12" height="12" aria-hidden="true">
                <path d="M9 1h2v2h-2zM5 5h2v2h-2zM9 5h2v2h-2zM1 9h2v2h-2zM5 9h2v2h-2zM9 9h2v2h-2z" fill="#a0a0a0" />
              </svg>
            </StatusBar>
          </Window>
        </Viewport>
        <SheetTabs>
          <SheetTab $w={78} $on />
          <SheetTab $w={37} />
          <SheetTab $w={46} />
          <SheetTab $w={46} />
          <SheetTab $w={31} />
        </SheetTabs>
      </Desktop>
    </>
  );
}
